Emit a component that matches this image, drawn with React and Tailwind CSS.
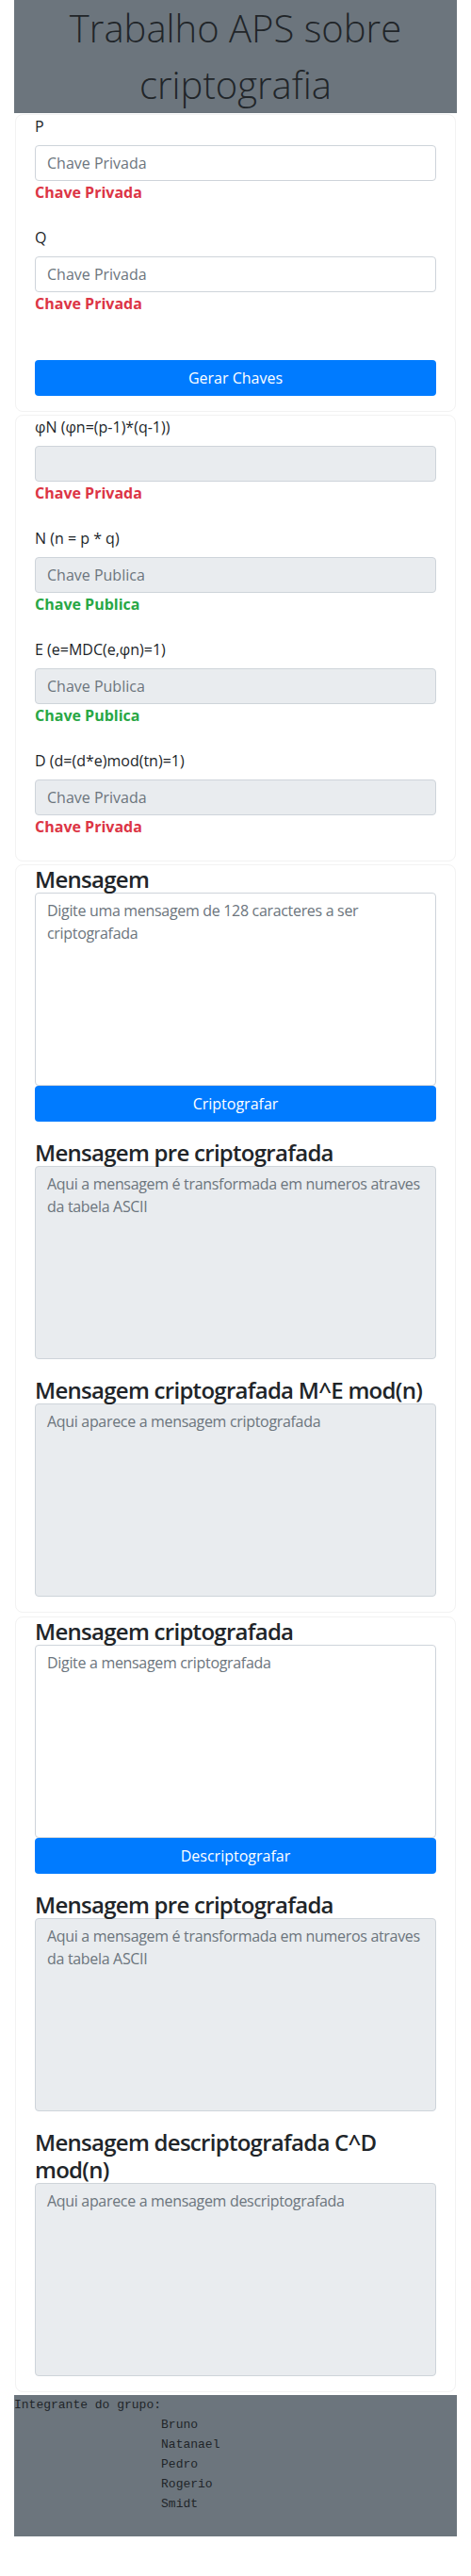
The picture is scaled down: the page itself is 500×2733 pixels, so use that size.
import React from "react";

const F = "font-['Open_Sans',sans-serif]";

function Field({ label, placeholder, note, noteColor, readOnly }) {
  return (
    <div className="mb-6">
      <label className="block mb-2 text-base leading-6 text-[#212529]">{label}</label>
      <input
        readOnly={readOnly}
        placeholder={placeholder}
        className={
          "block w-full h-[38px] px-3 rounded border border-[#ced4da] text-base text-[#495057] placeholder:text-[#6c757d] outline-none " +
          (readOnly ? "bg-[#e9ecef]" : "bg-white")
        }
      />
      <div className={"text-base leading-6 font-bold " + noteColor}>{note}</div>
    </div>
  );
}

function Area({ title, placeholder, readOnly, button, last }) {
  return (
    <div className={last ? "" : "mb-[18px]"}>
      <h4 className="text-2xl font-semibold leading-[29px] text-[#212529] tracking-[-0.03em]">{title}</h4>
      <textarea
        readOnly={readOnly}
        placeholder={placeholder}
        className={
          "block w-full h-[205px] px-3 py-[6px] rounded border border-[#ced4da] text-base leading-6 text-[#495057] placeholder:text-[#6c757d] resize-none outline-none tracking-[-0.02em] " +
          (readOnly ? "bg-[#e9ecef]" : "bg-white")
        }
      />
      {button && (
        <button className="block w-full h-[38px] rounded bg-[#007bff] text-white text-base">{button}</button>
      )}
    </div>
  );
}

function Card({ children, className = "" }) {
  return (
    <div className={"mx-px border border-[#f2f2f2] rounded-lg bg-white px-5 " + className}>{children}</div>
  );
}

export default function App() {
  const red = "text-[#dc3545]";
  const green = "text-[#28a745]";
  return (
    <div className={"w-[470px] mx-auto bg-white text-[#212529] " + F}>
      <div className="bg-[#6c757d] h-[120px] flex items-center justify-center">
        <h1 className="text-[40px] font-light leading-[60px] text-center text-[#212529]">
          Trabalho APS sobre
          <br />
          criptografia
        </h1>
      </div>

      <Card className="mt-px pb-4">
        <Field label="P" placeholder="Chave Privada" note="Chave Privada" noteColor={red} />
        <Field label="Q" placeholder="Chave Privada" note="Chave Privada" noteColor={red} />
        <button className="mt-12 block w-full h-[38px] rounded bg-[#007bff] text-white text-base">Gerar Chaves</button>
      </Card>

      <Card className="mt-[3px]">
        <Field label="φN (φn=(p-1)*(q-1))" placeholder="" note="Chave Privada" noteColor={red} readOnly />
        <Field label="N (n = p * q)" placeholder="Chave Publica" note="Chave Publica" noteColor={green} readOnly />
        <Field label="E (e=MDC(e,φn)=1)" placeholder="Chave Publica" note="Chave Publica" noteColor={green} readOnly />
        <Field label="D (d=(d*e)mod(tn)=1)" placeholder="Chave Privada" note="Chave Privada" noteColor={red} readOnly />
      </Card>

      <Card className="mt-[3px] pb-4">
        <Area
          title="Mensagem"
          placeholder="Digite uma mensagem de 128 caracteres a ser criptografada"
          button="Criptografar"
        />
        <Area
          title="Mensagem pre criptografada"
          placeholder="Aqui a mensagem é transformada em numeros atraves da tabela ASCII"
          readOnly
        />
        <Area
          title="Mensagem criptografada M^E mod(n)"
          placeholder="Aqui aparece a mensagem criptografada"
          readOnly
          last
        />
      </Card>

      <Card className="mt-[4px] pb-4">
        <Area title="Mensagem criptografada" placeholder="Digite a mensagem criptografada" button="Descriptografar" />
        <Area
          title="Mensagem pre criptografada"
          placeholder="Aqui a mensagem é transformada em numeros atraves da tabela ASCII"
          readOnly
        />
        <Area
          title="Mensagem descriptografada C^D mod(n)"
          placeholder="Aqui aparece a mensagem descriptografada"
          readOnly
          last
        />
      </Card>

      <div className="mt-[3px] bg-[#6c757d] h-[150px]">
        <pre className="font-['Liberation_Mono',monospace] text-[13px] leading-[21px] text-[#212529] whitespace-pre">
{"Integrante do grupo:\n                    Bruno\n                    Natanael\n                    Pedro\n                    Rogerio\n                    Smidt"}
        </pre>
      </div>
    </div>
  );
}
